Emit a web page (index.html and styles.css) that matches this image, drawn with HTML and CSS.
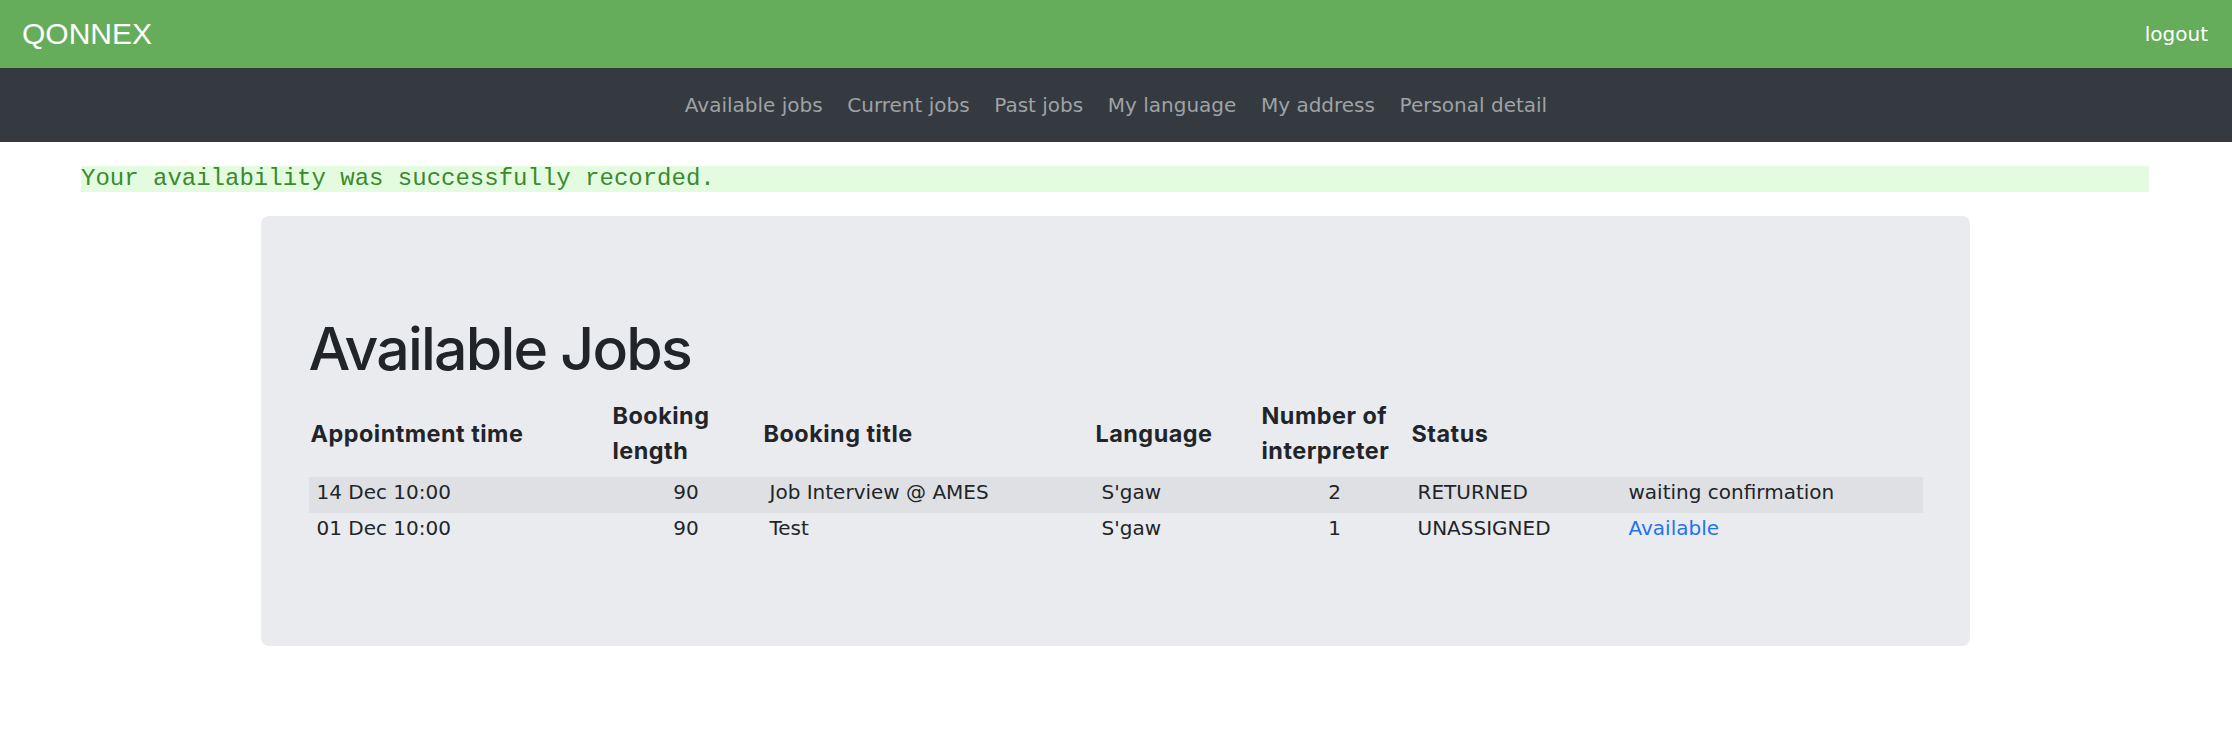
FILE: index.html
```html
<!DOCTYPE html>
<html lang="en">
<head>
<meta charset="utf-8">
<title>QONNEX - Available Jobs</title>
<link rel="stylesheet" href="styles.css">
</head>
<body>
<header class="topbar">
  <a class="brand" href="#">QONNEX</a>
  <a class="logout" href="#">logout</a>
</header>
<nav class="mainnav">
  <a class="nav-link" href="#">Available jobs</a>
  <a class="nav-link" href="#">Current jobs</a>
  <a class="nav-link" href="#">Past jobs</a>
  <a class="nav-link" href="#">My language</a>
  <a class="nav-link" href="#">My address</a>
  <a class="nav-link" href="#">Personal detail</a>
</nav>
<div class="flash">Your availability was successfully recorded.</div>
<main class="jumbo">
  <h1 class="title">Available Jobs</h1>
  <table class="jobs">
    <colgroup>
      <col class="c1"><col class="c2"><col class="c3"><col class="c4"><col class="c5"><col class="c6"><col class="c7">
    </colgroup>
    <thead>
      <tr>
        <th>Appointment time</th>
        <th>Booking<br>length</th>
        <th>Booking title</th>
        <th>Language</th>
        <th>Number of<br>interpreter</th>
        <th>Status</th>
        <th></th>
      </tr>
    </thead>
    <tbody>
      <tr class="stripe">
        <td>14 Dec 10:00</td>
        <td class="num">90</td>
        <td>Job Interview @ AMES</td>
        <td>S'gaw</td>
        <td class="num">2</td>
        <td>RETURNED</td>
        <td>waiting confirmation</td>
      </tr>
      <tr>
        <td>01 Dec 10:00</td>
        <td class="num">90</td>
        <td>Test</td>
        <td>S'gaw</td>
        <td class="num">1</td>
        <td>UNASSIGNED</td>
        <td><a class="avail" href="#">Available</a></td>
      </tr>
    </tbody>
  </table>
</main>
</body>
</html>
```
FILE: styles.css
```css
html, body {
  margin: 0;
  padding: 0;
  background: #ffffff;
  color: #212529;
}

.topbar {
  height: 68px;
  background: #66ad5b;
  display: flex;
  align-items: center;
  justify-content: space-between;
  padding: 0 24px 0 22px;
}

.brand {
  font-family: "Liberation Sans", Arial, sans-serif;
  font-size: 30px;
  color: #ffffff;
  text-decoration: none;
  line-height: 1;
}

.logout {
  font-family: "DejaVu Sans", Verdana, sans-serif;
  font-size: 20px;
  color: #ffffff;
  text-decoration: none;
}

.mainnav {
  height: 74px;
  background: #343a40;
  display: flex;
  align-items: center;
  justify-content: center;
}

.nav-link {
  font-family: "DejaVu Sans", Verdana, sans-serif;
  font-size: 20px;
  color: #9fa2a5;
  text-decoration: none;
  padding: 0 12.3px;
}

.flash {
  margin: 24px 83px 0 81px;
  height: 26px;
  line-height: 26px;
  background: #e3fce0;
  color: #3b8a2e;
  font-family: "Liberation Mono", "Courier New", monospace;
  font-size: 24px;
}

.jumbo {
  width: 1709px;
  box-sizing: border-box;
  margin: 24px auto 0;
  padding: 97px 47px 97px 48px;
  background: #eaebef;
  border-radius: 8px;
  position: relative;
  left: -1px;
}

.title {
  font-family: Inter, "Liberation Sans", sans-serif;
  font-weight: 500;
  font-size: 59px;
  line-height: 71px;
  letter-spacing: -1.8px;
  margin: 0 0 14px 0;
  color: #212529;
}

.jobs {
  width: 1614px;
  table-layout: fixed;
  border-collapse: collapse;
  border-spacing: 0;
}

.c1 { width: 302px; }
.c2 { width: 151px; }
.c3 { width: 332px; }
.c4 { width: 166px; }
.c5 { width: 150px; }
.c6 { width: 211px; }
.c7 { width: 302px; }

.jobs th {
  font-family: Inter, "Liberation Sans", sans-serif;
  font-weight: 700;
  font-size: 23.4px;
  line-height: 35px;
  letter-spacing: 0.5px;
  text-align: left;
  vertical-align: middle;
  padding: 0 0 9px 2px;
  color: #212529;
  white-space: nowrap;
}

.jobs td {
  font-family: "DejaVu Sans", Verdana, sans-serif;
  font-size: 20px;
  line-height: 30px;
  padding: 0 4px 6px 8px;
  color: #212529;
  white-space: nowrap;
}

.jobs td.num {
  text-align: center;
  padding-left: 0;
  padding-right: 0;
}

.stripe {
  background: #dfe0e4;
}

.avail {
  color: #1f73f0;
  text-decoration: none;
}
```
